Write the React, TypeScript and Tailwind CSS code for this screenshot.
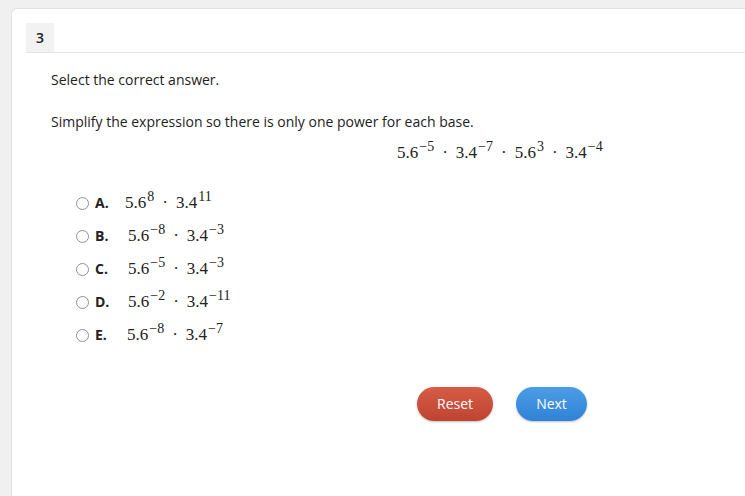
const Pow = ({ base, exp }: { base: string; exp: string }) => (
  <span className="inline-flex items-start">
    <span>{base}</span>
    <span className="ml-[1px] -mt-[3px] text-[14px] leading-none">{exp}</span>
  </span>
);

const Dot = () => <span className="mx-[8px]">·</span>;

const Expr = ({ terms }: { terms: [string, string][] }) => (
  <span
    className="inline-flex items-center text-[17px] leading-5 text-[#222]"
    style={{ fontFamily: '"Liberation Serif", "Times New Roman", serif' }}
  >
    {terms.map(([b, e], i) => (
      <span key={i} className="inline-flex items-center">
        {i > 0 && <Dot />}
        <Pow base={b} exp={e} />
      </span>
    ))}
  </span>
);

const options: { label: string; offset: string; terms: [string, string][] }[] = [
  { label: "A.", offset: "ml-0", terms: [["5.6", "8"], ["3.4", "11"]] },
  { label: "B.", offset: "ml-[3px]", terms: [["5.6", "−8"], ["3.4", "−3"]] },
  { label: "C.", offset: "ml-[3px]", terms: [["5.6", "−5"], ["3.4", "−3"]] },
  { label: "D.", offset: "ml-[3px]", terms: [["5.6", "−2"], ["3.4", "−11"]] },
  { label: "E.", offset: "ml-[2px]", terms: [["5.6", "−8"], ["3.4", "−7"]] },
];

export default function App() {
  return (
    <div
      className="h-[496px] w-[745px] overflow-hidden bg-[#f0f0f0] pl-[11px] pt-[8px]"
      style={{ fontFamily: '"Open Sans", "Liberation Sans", sans-serif' }}
    >
      <div className="h-full rounded-tl-md border-l border-t border-[#e2e2e2] bg-white pl-[14px] pt-[14px]">
        <div className="flex border-b border-[#e4e4e4]">
          <div className="flex h-[29px] w-[28px] items-center justify-center bg-[#f2f2f2] text-[14px] font-semibold text-[#222]">
            3
          </div>
        </div>

        <div className="pl-[25px] text-[14px] leading-5 text-[#222]">
          <p className="mt-[17px]">Select the correct answer.</p>
          <p className="mt-[22px]">Simplify the expression so there is only one power for each base.</p>
          <div className="mt-[11px] pl-[346px]">
            <Expr terms={[["5.6", "−5"], ["3.4", "−7"], ["5.6", "3"], ["3.4", "−4"]]} />
          </div>

          <div className="mt-[30px] flex flex-col gap-[13px] pl-[25px]">
            {options.map((o) => (
              <div key={o.label} className="flex h-5 items-center">
                <span className="h-[13px] w-[13px] rounded-full border border-[#8f8f8f] bg-white" />
                <span className="ml-[6px] w-[30px] text-[14px] font-bold text-[#222]">{o.label}</span>
                <span className={o.offset}>
                  <Expr terms={o.terms} />
                </span>
              </div>
            ))}
          </div>

          <div className="mt-[42px] flex gap-[23px] pl-[366px]">
            <button className="h-[34px] w-[76px] rounded-full bg-gradient-to-b from-[#d65c46] to-[#bf4331] text-[14px] text-white shadow-[0_1px_2px_rgba(0,0,0,0.25)]">
              Reset
            </button>
            <button className="h-[34px] w-[71px] rounded-full bg-gradient-to-b from-[#4c9ce6] to-[#2f82d6] text-[14px] text-white shadow-[0_1px_2px_rgba(0,0,0,0.25)]">
              Next
            </button>
          </div>
        </div>
      </div>
    </div>
  );
}
